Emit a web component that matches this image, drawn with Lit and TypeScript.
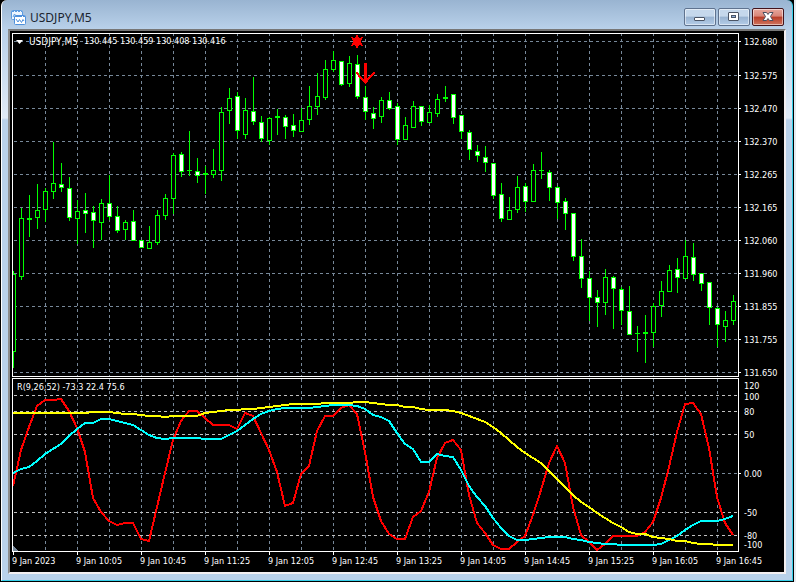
import { LitElement, html, svg, css } from "lit";
import { customElement } from "lit/decorators.js";
import { styleMap } from "lit/directives/style-map.js";

type Candle = [high: number, top: number, bottom: number, low: number, kind: 0 | 1];

const STEP = 8;
const FIRST = 13;

// One entry per bar, in plot units; kind 1 is a falling (filled) bar.
const CANDLES: Candle[] = [
  [271, 274, 352, 368, 0], [208, 218, 277, 280, 0], [195, 218, 220, 237, 0], [184, 210, 218, 229, 0],
  [188, 191, 210, 222, 0], [142, 183, 192, 199, 0], [163, 184, 188, 192, 1], [177, 188, 218, 221, 1],
  [200, 211, 219, 244, 0], [193, 210, 214, 233, 1], [206, 212, 221, 248, 1], [199, 203, 223, 240, 0],
  [175, 203, 217, 220, 1], [206, 216, 231, 233, 1], [220, 222, 230, 240, 0], [210, 221, 241, 241, 1],
  [240, 240, 248, 248, 1], [226, 242, 249, 249, 0], [210, 215, 243, 245, 0], [194, 198, 216, 220, 0],
  [153, 155, 199, 214, 0], [152, 154, 172, 177, 1], [131, 170, 171, 176, 0], [158, 171, 176, 183, 1],
  [166, 173, 175, 194, 0], [149, 170, 175, 178, 0], [107, 112, 171, 181, 0], [88, 98, 111, 124, 0],
  [92, 96, 131, 139, 1], [98, 110, 135, 139, 0], [77, 111, 122, 125, 1], [116, 122, 139, 142, 1],
  [117, 118, 141, 145, 0], [109, 116, 118, 135, 0], [115, 117, 127, 139, 1], [114, 125, 131, 137, 1],
  [108, 120, 132, 132, 0], [86, 106, 120, 125, 0], [73, 96, 107, 115, 0], [60, 69, 98, 100, 0],
  [51, 60, 70, 72, 0], [61, 61, 85, 86, 1], [56, 63, 84, 87, 0], [55, 64, 97, 99, 1],
  [86, 97, 112, 120, 1], [107, 113, 119, 129, 1], [97, 100, 117, 123, 0], [92, 100, 109, 110, 1],
  [103, 106, 140, 145, 1], [117, 125, 140, 140, 0], [101, 106, 128, 128, 0], [106, 106, 122, 126, 1],
  [105, 112, 123, 123, 0], [94, 99, 114, 117, 0], [86, 97, 99, 102, 0], [94, 94, 118, 124, 1],
  [115, 115, 132, 139, 1], [130, 132, 150, 160, 1], [145, 151, 156, 162, 1], [146, 157, 163, 172, 1],
  [163, 163, 196, 199, 1], [183, 194, 219, 222, 1], [197, 210, 220, 220, 0], [176, 187, 210, 213, 0],
  [183, 186, 202, 212, 1], [164, 170, 202, 202, 0], [152, 170, 171, 179, 0], [170, 172, 188, 201, 1],
  [186, 187, 203, 219, 1], [198, 201, 214, 230, 1], [213, 213, 257, 261, 1], [239, 256, 279, 288, 1],
  [271, 278, 298, 321, 1], [290, 297, 303, 327, 1], [269, 277, 303, 315, 0], [276, 277, 289, 329, 1],
  [287, 289, 311, 325, 1], [286, 311, 335, 335, 1], [326, 333, 334, 352, 0], [315, 332, 334, 363, 0],
  [303, 306, 333, 347, 0], [281, 291, 306, 317, 0], [265, 270, 292, 292, 0], [258, 269, 278, 293, 1],
  [240, 256, 279, 279, 0], [243, 257, 275, 281, 1], [273, 273, 284, 291, 1], [282, 282, 308, 325, 1],
  [307, 308, 325, 347, 1], [311, 320, 327, 342, 0], [295, 301, 321, 325, 0],
];

const SLOW = [
  413, 413, 413, 413, 413, 413, 413, 413, 413, 413, 412, 412, 412, 413, 414, 414, 415, 416, 416, 417,
  416, 416, 416, 416, 413, 412, 411, 410, 410, 409, 409, 408, 407, 406, 405, 404, 404, 404, 404, 403,
  403, 403, 403, 402, 402, 403, 404, 405, 405, 407, 407, 409, 410, 410, 410, 411, 413, 416, 419, 422,
  427, 433, 440, 447, 453, 458, 463, 471, 479, 487, 495, 502, 507, 513, 518, 523, 527, 532, 534, 534,
  537, 538, 539, 541, 541, 543, 544, 544, 545, 545, 545,
];
const MEDIUM = [
  473, 469, 467, 461, 454, 449, 444, 436, 429, 423, 423, 419, 419, 421, 423, 425, 430, 435, 438, 439,
  438, 438, 438, 438, 439, 439, 439, 435, 431, 425, 419, 414, 411, 409, 408, 408, 408, 408, 407, 406,
  405, 405, 405, 406, 409, 415, 417, 421, 433, 444, 449, 462, 462, 454, 456, 457, 470, 486, 497, 506,
  518, 528, 536, 540, 540, 539, 538, 537, 537, 537, 539, 540, 542, 543, 544, 544, 545, 545, 545, 545,
  545, 544, 540, 536, 530, 525, 521, 521, 521, 519, 516,
];
const FAST = [
  486, 450, 427, 406, 400, 400, 399, 411, 428, 452, 498, 512, 521, 525, 523, 523, 539, 541, 507, 473,
  440, 421, 411, 411, 418, 425, 425, 425, 429, 413, 416, 433, 450, 472, 506, 503, 474, 466, 431, 416,
  416, 408, 405, 414, 452, 497, 521, 534, 539, 539, 517, 511, 492, 458, 443, 440, 450, 495, 523, 533,
  545, 549, 549, 542, 536, 515, 490, 463, 446, 463, 507, 535, 542, 550, 544, 536, 536, 536, 536, 532,
  522, 498, 467, 432, 404, 403, 414, 448, 497, 523, 535,
];

const COLUMNS = Array.from({ length: 22 }, (_, i) => 45 + i * 32);
const PRICE_ROWS = [41, 75, 108, 141, 174, 207, 240, 273, 306, 339, 372];
const LEVEL_ROWS = [395, 411, 434, 512, 535];

interface Tick { at: number; label: string; mark?: boolean }

const PRICES: Tick[] = [
  "132.680", "132.575", "132.470", "132.370", "132.265", "132.165",
  "132.060", "131.960", "131.855", "131.755", "131.650",
].map((label, i) => ({ at: PRICE_ROWS[i], label, mark: true }));

const LEVELS: Tick[] = [
  { at: 385, label: "120" }, { at: 396, label: "100" }, { at: 411, label: "80" },
  { at: 434, label: "50" }, { at: 473, label: "0.00", mark: true },
  { at: 512, label: "-50" }, { at: 535, label: "-80" }, { at: 544, label: "-100" },
];

const TIMES = [
  "9 Jan 2023", "9 Jan 10:05", "9 Jan 10:45", "9 Jan 11:25", "9 Jan 12:05", "9 Jan 12:45",
  "9 Jan 13:25", "9 Jan 14:05", "9 Jan 14:45", "9 Jan 15:25", "9 Jan 16:05", "9 Jan 16:45",
];

const barX = (i: number) => FIRST + i * STEP;
const series = (values: number[]) => values.map((y, i) => `${barX(i)},${y}`).join(" ");

@customElement("value-axis")
export class ValueAxis extends LitElement {
  static properties = {
    ticks: { attribute: false },
    start: { type: Number },
    end: { type: Number },
  };
  declare ticks: Tick[];
  declare start: number;
  declare end: number;

  static styles = css`
    :host { display: block; min-height: 0; }
    .axis { display: grid; height: 100%; margin: 0; padding: 0; list-style: none; }
    .tick { align-self: end; display: flex; align-items: center; gap: 3px; height: 1px; line-height: 12px; }
    .tick::before { content: ""; flex: none; width: 2px; height: 1px; }
    .mark::before { background: #fff; }
  `;

  render() {
    const rows = this.ticks
      .map((t, i) => `minmax(0, ${t.at + 1 - (i ? this.ticks[i - 1].at + 1 : this.start)}fr)`)
      .join(" ");
    const rest = this.end - this.ticks[this.ticks.length - 1].at - 1;
    return html`<ul class="axis" style=${styleMap({ gridTemplateRows: `${rows} minmax(0, ${rest}fr)` })}>
      ${this.ticks.map((t) => html`<li class="tick ${t.mark ? "mark" : ""}">${t.label}</li>`)}
    </ul>`;
  }
}

@customElement("app-root")
export class AppRoot extends LitElement {
  static styles = css`
    :host {
      display: block;
      height: 100vh;
      min-height: 320px;
      box-sizing: border-box;
      padding-right: 2px;
      background: #e6ebf0;
      font-family: "DejaVu Sans Condensed", "DejaVu Sans", sans-serif;
      font-size: 9px;
      color: #fff;
    }
    .edge { height: 100%; box-sizing: border-box; background: #000; padding: 0 1px 1px; }
    .window {
      display: flex;
      flex-direction: column;
      height: 100%;
      box-sizing: border-box;
      padding: 0 6px 6px;
      border: solid #35cfe9;
      border-width: 0 1px 1px;
      border-left-color: #fff;
      border-radius: 6px 6px 0 0;
      background: linear-gradient(#99b4d1, #b9d1ea 29px, #e0eaf6 118px, #b9d1ea 120px);
    }
    .titlebar { flex: none; display: flex; align-items: center; height: 29px; padding: 0 2px 0 3px; gap: 4px; }
    .app-icon { flex: none; width: 15px; height: 15px; margin-top: 6px; }
    .title {
      flex: 1;
      margin: 6px 0 0;
      font: 400 12px/16px "Noto Sans", "Open Sans", sans-serif;
      color: #1b2430;
    }
    .controls { display: flex; gap: 2px; margin-top: 5px; }
    .control {
      display: grid;
      place-items: center;
      width: 32px;
      height: 18px;
      padding: 0;
      border: 1px solid #5f738f;
      border-radius: 2px;
      box-shadow: inset 0 0 0 1px #ffffff80;
      background: linear-gradient(#c5d8ec 0 45%, #98b3d1 50%, #b4cde8);
    }
    .close { border-color: #43141c; background: linear-gradient(#e6a79d, #d98578 45%, #b93c27 50%, #cf7560); }
    .control svg { display: block; }

    .client {
      flex: 1;
      min-height: 0;
      display: grid;
      grid-template-columns: minmax(0, 1fr) 45px;
      grid-template-rows: minmax(0, 344fr) minmax(0, 175fr) 20px;
      padding: 2px 0 0 2px;
      border: 2px solid #f3eff1;
      border-top-color: #777;
      border-left-color: #8c8c8c;
      background: #000;
    }
    .pane { position: relative; border: 1px solid #fff; }
    .indicator { margin-top: 1px; }
    .plot { display: block; width: 100%; height: 100%; }
    .axis-offset { margin: 1px 0; }
    .levels { margin-top: 2px; }

    .caption { position: absolute; top: 1px; left: 3px; display: flex; align-items: center; margin: 0; line-height: 13px; white-space: nowrap; }
    .symbol { gap: 6px; }
    .symbol-name { font-size: 10px; }
    .indicator .caption { top: 2px; left: 4px; }
    .marker { width: 7px; height: 4px; }

    .grid { stroke: #778899; stroke-dasharray: 3 3; }
    .level { stroke: #c0c0c0; stroke-dasharray: 3 3; }
    .wick, .mark { fill: #0f0; }
    .body { fill: #000; stroke: #0f0; }
    .falling { fill: #fff; }
    .signal { fill: #f00; }
    .arrow { fill: none; stroke: #f00; stroke-width: 3; }
    .arrow-head { fill: none; stroke: #f00; stroke-width: 2; }
    .line { fill: none; stroke-width: 2; }
    .fast { stroke: #f00; }
    .medium { stroke: #0ff; }
    .slow { stroke: #ff0; }
    .corner { fill: #778899; }

    .times { display: grid; grid-template-columns: repeat(11, minmax(0, 64fr)) minmax(0, 22fr); margin: 0; padding: 0 0 0 1px; list-style: none; }
    .time { white-space: nowrap; line-height: 12px; }
    .time::before { content: ""; display: block; width: 1px; height: 3px; background: #fff; }
    .time span { margin-left: -1px; }
  `;

  private candle([high, top, bottom, low, kind]: Candle, i: number) {
    const x = barX(i);
    const wick = svg`<rect class="wick" x=${x} y=${high} width="1" height=${low - high} />`;
    if (bottom - top < 3) {
      return svg`${wick}<rect class="mark" x=${x - 2} y=${top} width="5" height=${bottom - top} />`;
    }
    return svg`${wick}<rect class="body ${kind ? "falling" : ""}" x=${x - 1.5} y=${top + 0.5}
      width="4" height=${bottom - top - 1} />`;
  }

  private columns(from: number, to: number) {
    return COLUMNS.map((x) => svg`<path class="grid" d="M${x + 0.5} ${from}V${to}" />`);
  }

  private priceChart() {
    return html`<svg class="plot" viewBox="13 34 725 342" preserveAspectRatio="none" shape-rendering="crispEdges"
      role="img" aria-label="USDJPY five minute candles">
      ${this.columns(33, 376)}
      ${PRICE_ROWS.map((y) => svg`<path class="grid" d="M14 ${y + 0.5}H738" />`)}
      ${CANDLES.map((c, i) => this.candle(c, i))}
      <path class="signal" d="M357 34L359 38L363 37L361 41.500L363 46L359 45L357 49L355 45L351 46L353 41.500L351 37L355 38Z" />
      <path class="arrow" d="M365.500 63V82" />
      <path class="arrow-head" d="M356.500 72.500L360 77L365.500 82.500L370 77L375 72.500" />
    </svg>`;
  }

  private indicatorChart() {
    return html`<svg class="plot" viewBox="13 379 725 172" preserveAspectRatio="none" shape-rendering="crispEdges"
      role="img" aria-label="R indicator">
      ${this.columns(379, 551)}
      <path class="grid" d="M14 473.500H738" />
      ${LEVEL_ROWS.map((y) => svg`<path class="level" d="M14 ${y + 0.5}H738" />`)}
      <polyline class="line fast" points=${series(FAST)} />
      <polyline class="line medium" points=${series(MEDIUM)} />
      <polyline class="line slow" points=${series(SLOW)} />
      <path class="corner" d="M13 546L18 551H13Z" />
    </svg>`;
  }

  render() {
    return html`
      <div class="edge">
        <main class="window">
          <header class="titlebar">
            <svg class="app-icon" viewBox="0 0 15 15" aria-hidden="true">
              <rect x="0.500" y="0.500" width="11" height="9" rx="1" fill="#eef6ff" stroke="#5c9be0" />
              <path d="M1 1.500H11" stroke="#5c9be0" stroke-dasharray="2 1" />
              <path d="M2 7L3.500 4L5 6" fill="none" stroke="#5c9be0" />
              <rect x="3.500" y="5.500" width="11" height="9" rx="1" fill="#fff" stroke="#4e90dc" />
              <path d="M4 6.500H14" stroke="#4e90dc" stroke-dasharray="7 1" />
              <path d="M5 9L7 12L8.500 9.500L10.500 12.500L12 9.500L13 11" fill="none" stroke="#4e90dc" />
            </svg>
            <h1 class="title">USDJPY,M5</h1>
            <div class="controls">
              <button class="control" aria-label="Minimize">
                <svg width="12" height="12"><rect x="0.500" y="6.500" width="10" height="3" rx="0.500" fill="#fff" stroke="#4b5566" /></svg>
              </button>
              <button class="control" aria-label="Maximize">
                <svg width="12" height="12">
                  <rect x="0.500" y="1.500" width="10" height="8" rx="0.500" fill="#fff" stroke="#4b5566" />
                  <rect x="3.500" y="4.500" width="4" height="2" fill="#8eb0dc" stroke="#4b5566" />
                </svg>
              </button>
              <button class="control close" aria-label="Close">
                <svg width="12" height="12">
                  <path d="M1 1.500H4.500L6 3.500L7.500 1.500H11L8.500 5.500L11 9.500H7.500L6 7.500L4.500 9.500H1L3.500 5.500Z" fill="#fff" stroke="#4b4f60" />
                </svg>
              </button>
            </div>
          </header>
          <section class="client">
            <div class="pane">
              ${this.priceChart()}
              <p class="caption symbol">
                <svg class="marker" viewBox="0 0 7 4" aria-hidden="true"><path d="M0 0H7L3.500 4Z" fill="#fff" /></svg>
                <span class="symbol-name">USDJPY,M5</span>
                <span>130.445 130.459 130.408 130.416</span>
              </p>
            </div>
            <value-axis class="axis-offset" .ticks=${PRICES} start="34" end="376"></value-axis>
            <div class="pane indicator">
              ${this.indicatorChart()}
              <p class="caption">R(9,26,52) -73.3 22.4 75.6</p>
            </div>
            <value-axis class="axis-offset levels" .ticks=${LEVELS} start="379" end="551"></value-axis>
            <ol class="times">
              ${TIMES.map((t) => html`<li class="time"><span>${t}</span></li>`)}
            </ol>
          </section>
        </main>
      </div>
    `;
  }
}
